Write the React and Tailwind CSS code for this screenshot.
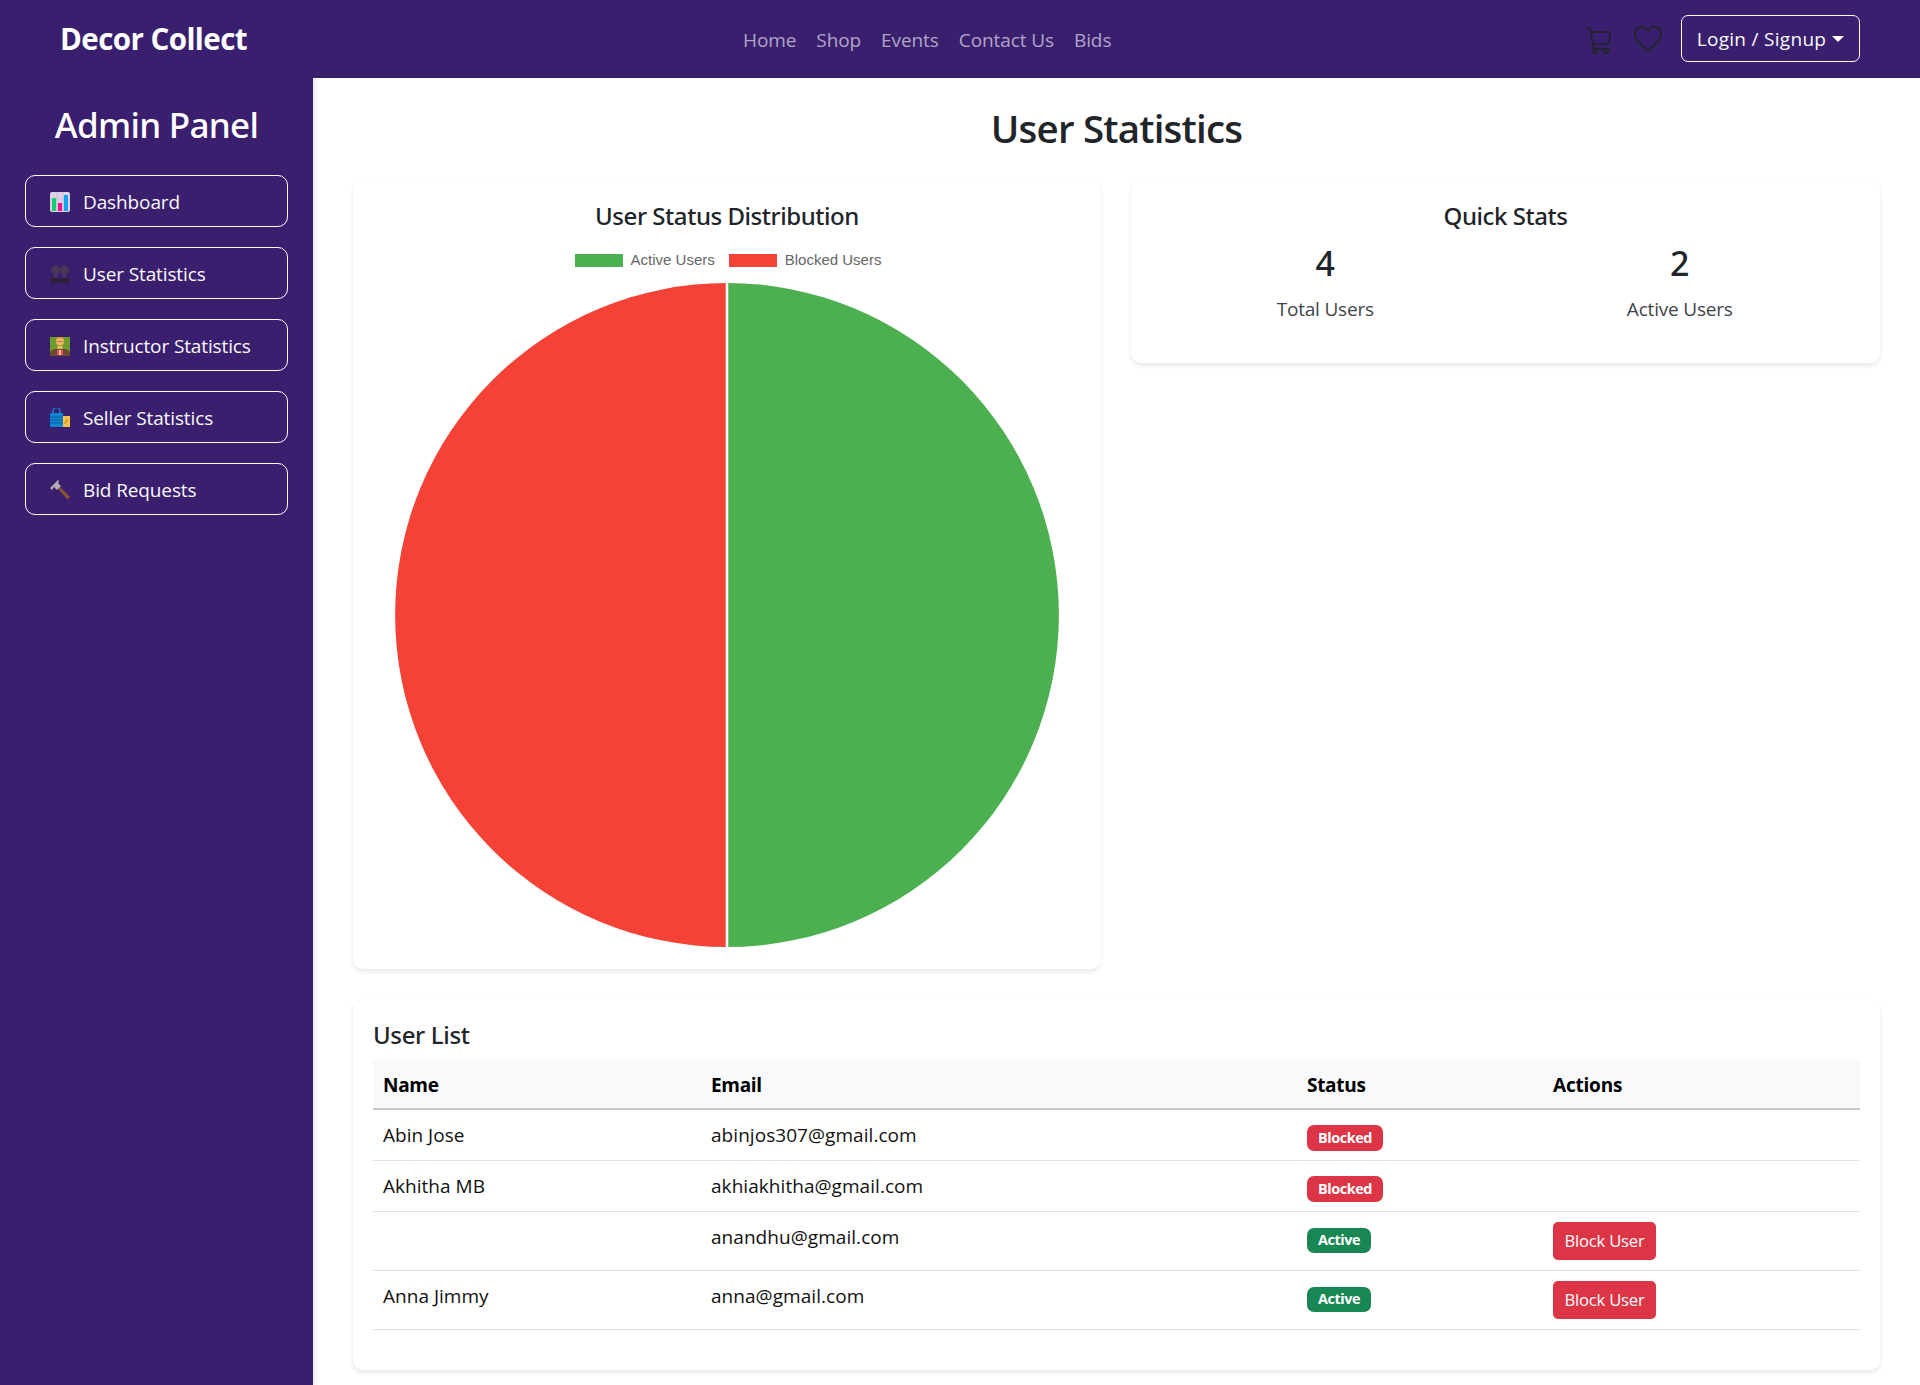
import React from "react";

const purple = "bg-[#3a1f6e]";

function IconChart() {
  return (
    <svg width="20" height="20" viewBox="0 0 20 20" className="shrink-0">
      <rect x="0" y="0" width="20" height="20" rx="2" fill="#ddd3e6" />
      <path d="M0 7h20M0 13h20M7 0v20M13 0v20" stroke="#c5b9d0" strokeWidth="0.8" />
      <rect x="2" y="6" width="4" height="13" fill="#10d070" />
      <rect x="8" y="11" width="4" height="8" fill="#f0148c" />
      <rect x="14" y="3" width="4" height="16" fill="#10a5ee" />
    </svg>
  );
}
function IconBusts() {
  return (
    <svg width="20" height="20" viewBox="0 0 20 20" className="shrink-0">
      <circle cx="5.5" cy="6" r="4.5" fill="#4b3656" />
      <circle cx="14.5" cy="6" r="4.5" fill="#4b3656" />
      <rect x="4" y="10" width="3" height="4" fill="#4b3656" />
      <rect x="13" y="10" width="3" height="4" fill="#4b3656" />
      <rect x="0" y="14" width="20" height="5" rx="1" fill="#2d2040" />
    </svg>
  );
}
function IconTeacher() {
  return (
    <svg width="20" height="20" viewBox="0 0 20 20" className="shrink-0">
      <rect x="0" y="1" width="20" height="15" fill="#6f9a2e" />
      <path d="M0 20v-3c0-2 3-4 6-4h8c3 0 6 2 6 4v3z" fill="#6b4a32" />
      <circle cx="10" cy="5.5" r="4" fill="#f4b860" />
      <path d="M6 4c0-4 8-4 8 0l-1-1H7z" fill="#f0a030" />
      <path d="M6.5 5.5h7" stroke="#8a7a70" strokeWidth="0.8" />
      <rect x="7.5" y="10" width="5" height="3" fill="#f4b860" />
      <rect x="7" y="14" width="6" height="5" fill="#f0447a" />
      <rect x="9" y="14" width="2" height="5" fill="#f6d060" />
    </svg>
  );
}
function IconBags() {
  return (
    <svg width="20" height="20" viewBox="0 0 20 20" className="shrink-0">
      <rect x="9" y="8" width="11" height="11" fill="#f4c24c" />
      <path d="M17 11c0 3-1 4-3 4" stroke="#c98a18" strokeWidth="1.2" fill="none" />
      <rect x="0" y="5" width="13" height="14" rx="1" fill="#0f86d2" />
      <path d="M0 9h13M0 12h13M0 15h13" stroke="#0a5f9f" strokeWidth="1" />
      <path d="M3 5V3a3.4 3.4 0 0 1 7 0v2" stroke="#0f86d2" strokeWidth="1.4" fill="none" />
    </svg>
  );
}
function IconHammer() {
  return (
    <svg width="20" height="20" viewBox="0 0 20 20" className="shrink-0">
      <path d="M8 9l2-2 10 10-2.4 2.4z" fill="#8a5434" />
      <path d="M0 8l6-6 2-2 1 1-1 2 3 3-4 4-3-3-2 3z" fill="#b3aeb4" />
    </svg>
  );
}

function SideItem({ icon, label }) {
  return (
    <a className="flex h-[52px] items-center gap-[13px] rounded-[10px] border border-white pl-[24px] text-[19px] leading-[30px] tracking-[-0.12px] text-[#f8f9fa]">
      <span className="relative top-[1px]">{icon}</span>
      <span className="relative top-[1px]">{label}</span>
    </a>
  );
}

function Badge({ tone, label }) {
  const cls =
    tone === "red"
      ? "mt-[5px] w-[76px] h-[26px] bg-[#dc3545]"
      : "mt-[6px] w-[64px] h-[25px] bg-[#198754]";
  return (
    <div className="flex h-[30px] items-start">
      <span className={`flex items-center justify-center rounded-[7px] text-[14.4px] font-bold leading-none tracking-[-0.45px] text-white ${cls}`}>
        {label}
      </span>
    </div>
  );
}

function BlockBtn() {
  return (
    <button className="flex h-[38px] w-[103px] items-center justify-center rounded-[5px] bg-[#dc3545] text-[16.6px] leading-none tracking-[-0.2px] text-white">
      Block User
    </button>
  );
}

const rows = [
  { name: "Abin Jose", email: "abinjos307@gmail.com", st: "red", label: "Blocked" },
  { name: "Akhitha MB", email: "akhiakhitha@gmail.com", st: "red", label: "Blocked" },
  { name: "", email: "anandhu@gmail.com", st: "green", label: "Active", btn: true },
  { name: "Anna Jimmy", email: "anna@gmail.com", st: "green", label: "Active", btn: true },
];

export default function App() {
  return (
    <div className="min-h-screen bg-white font-['Open_Sans',sans-serif] text-[#212529]">
      <nav className={`flex h-[78px] items-center pl-[60px] pr-[60px] ${purple}`}>
        <a className="w-[188px] whitespace-nowrap text-[29.5px] font-bold leading-none tracking-[-0.55px] text-white">
          Decor Collect
        </a>
        <div className="relative top-[1px] ml-[495px] flex gap-[20px] text-[19px] leading-[30px] tracking-[-0.09px] text-[#b0a5c5]">
          <a>Home</a>
          <a>Shop</a>
          <a>Events</a>
          <a>Contact Us</a>
          <a>Bids</a>
        </div>
        <div className="ml-auto flex items-center">
          <svg width="26" height="28" viewBox="0 0 26 28" fill="none" stroke="#212529" strokeWidth="1.7" className="mt-[2px]">
            <path d="M0.5 1.5h3.5l3.5 21.5h14.5M5 6h19.5l-2 12H6.5" />
            <circle cx="9" cy="25" r="2.3" />
            <circle cx="20.5" cy="25" r="2.3" />
          </svg>
          <svg width="28" height="26" viewBox="0 0 28 26" fill="none" stroke="#212529" strokeWidth="1.8" className="ml-[22px] mr-[19px] mt-[-1px]">
            <path d="M14 25C7 19 1 14 1 8a6.8 6.8 0 0 1 13-3 6.8 6.8 0 0 1 13 3c0 6-6 11-13 17z" />
          </svg>
          <button className="mt-[-1px] flex h-[47px] w-[179px] items-center justify-center gap-[6px] rounded-[7px] border border-white text-[19px] tracking-[0.3px] text-[#f8f9fa]">
            <span className="relative top-[1px]">Login / Signup</span>
            <span className="mt-[1px] h-0 w-0 border-x-[6px] border-t-[6px] border-x-transparent border-t-white" />
          </button>
        </div>
      </nav>

      <div className="flex">
        <aside className={`min-h-[1307px] w-[313px] shrink-0 px-[25px] pt-[22px] shadow-[2px_0_5px_rgba(0,0,0,0.1)] ${purple}`}>
          <h2 className="h-[50px] text-center font-['Noto_Sans',sans-serif] text-[35px] font-medium leading-[50px] tracking-[-0.7px] text-white">
            Admin Panel
          </h2>
          <div className="mt-[25px] flex flex-col gap-[20px]">
            <SideItem icon={<IconChart />} label="Dashboard" />
            <SideItem icon={<IconBusts />} label="User Statistics" />
            <SideItem icon={<IconTeacher />} label="Instructor Statistics" />
            <SideItem icon={<IconBags />} label="Seller Statistics" />
            <SideItem icon={<IconHammer />} label="Bid Requests" />
          </div>
        </aside>

        <main className="min-w-0 flex-1 px-[40px]">
          <h1 className="pt-[25px] text-center text-[38.5px] font-semibold leading-[50px] tracking-[-0.8px]">
            User Statistics
          </h1>
          <div className="mt-[28px] grid grid-cols-[748px_1fr] items-start gap-[30px]">
            <section className="rounded-[10px] bg-white px-[20px] pb-[22px] pt-[20px] shadow-[0_2.5px_5px_rgba(0,0,0,0.09)]">
              <h5 className="text-center font-['Noto_Sans',sans-serif] text-[24px] font-medium leading-[30px] tracking-[-0.45px]">
                User Status Distribution
              </h5>
              <div className="mt-[20px] flex h-[18px] items-center justify-center pl-[2px] font-['Liberation_Sans',sans-serif] text-[15px] text-[#666666]">
                <span className="h-[13px] w-[48px] bg-[#4caf50]" />
                <span className="ml-[8px]">Active Users</span>
                <span className="ml-[14px] h-[13px] w-[48px] bg-[#f44336]" />
                <span className="ml-[8px]">Blocked Users</span>
              </div>
              <div className="mt-[14px] flex justify-center">
                <svg width="664" height="664" viewBox="0 0 664 664">
                  <path d="M332 0A332 332 0 0 1 332 664Z" fill="#4caf50" />
                  <path d="M332 0A332 332 0 0 0 332 664Z" fill="#f44336" />
                  <path d="M332 0V664" stroke="#ffffff" strokeWidth="2.5" />
                </svg>
              </div>
            </section>

            <section className="h-[182px] rounded-[10px] bg-white px-[20px] pt-[20px] shadow-[0_2.5px_5px_rgba(0,0,0,0.09)]">
              <h5 className="text-center font-['Noto_Sans',sans-serif] text-[24px] font-medium leading-[30px] tracking-[-0.45px]">Quick Stats</h5>
              <div className="ml-[-3px] mr-[3px] mt-[8px] grid grid-cols-2 text-center">
                <div>
                  <div className="font-['Noto_Sans',sans-serif] text-[34px] font-medium leading-[48px]">4</div>
                  <div className="mt-[7px] text-[19px] leading-[30px] tracking-[-0.2px] text-[#3f4449]">Total Users</div>
                </div>
                <div>
                  <div className="font-['Noto_Sans',sans-serif] text-[34px] font-medium leading-[48px]">2</div>
                  <div className="mt-[7px] text-[19px] leading-[30px] tracking-[-0.2px] text-[#3f4449]">Active Users</div>
                </div>
              </div>
            </section>
          </div>

          <section className="mb-[15px] mt-[31px] rounded-[10px] bg-white px-[20px] pb-[40px] pt-[20px] shadow-[0_2.5px_5px_rgba(0,0,0,0.09)]">
            <h4 className="mb-[9px] h-[30px] font-['Noto_Sans',sans-serif] text-[24px] font-medium leading-[30px] tracking-[-0.35px]">User List</h4>
            <table className="w-full table-fixed border-collapse text-left text-[19px] text-[#111111]">
              <colgroup>
                <col className="w-[328px]" />
                <col className="w-[596px]" />
                <col className="w-[246px]" />
                <col className="w-[317px]" />
              </colgroup>
              <thead>
                <tr className="h-[50px] border-b-2 border-[#c6c7c8] bg-[#f8f9fa] text-black">
                  <th className="px-[10px] pt-[3px] font-bold tracking-[-0.3px]">Name</th>
                  <th className="px-[10px] pt-[3px] font-bold tracking-[-0.3px]">Email</th>
                  <th className="px-[10px] pt-[3px] font-bold tracking-[-0.3px]">Status</th>
                  <th className="px-[10px] pt-[3px] font-bold tracking-[-0.2px]">Actions</th>
                </tr>
              </thead>
              <tbody>
                {rows.map((r) => (
                  <tr key={r.email} className="border-b border-[#dee2e6]">
                    <td className="p-[10px] align-top leading-[30px] tracking-[0.02px]">{r.name}</td>
                    <td className="p-[10px] align-top leading-[30px] tracking-[0.05px]">{r.email}</td>
                    <td className="p-[10px] align-top leading-[30px]">
                      <Badge tone={r.st} label={r.label} />
                    </td>
                    <td className="p-[10px] align-top leading-[30px]">
                      {r.btn ? <BlockBtn /> : null}
                    </td>
                  </tr>
                ))}
              </tbody>
            </table>
          </section>
        </main>
      </div>
    </div>
  );
}
